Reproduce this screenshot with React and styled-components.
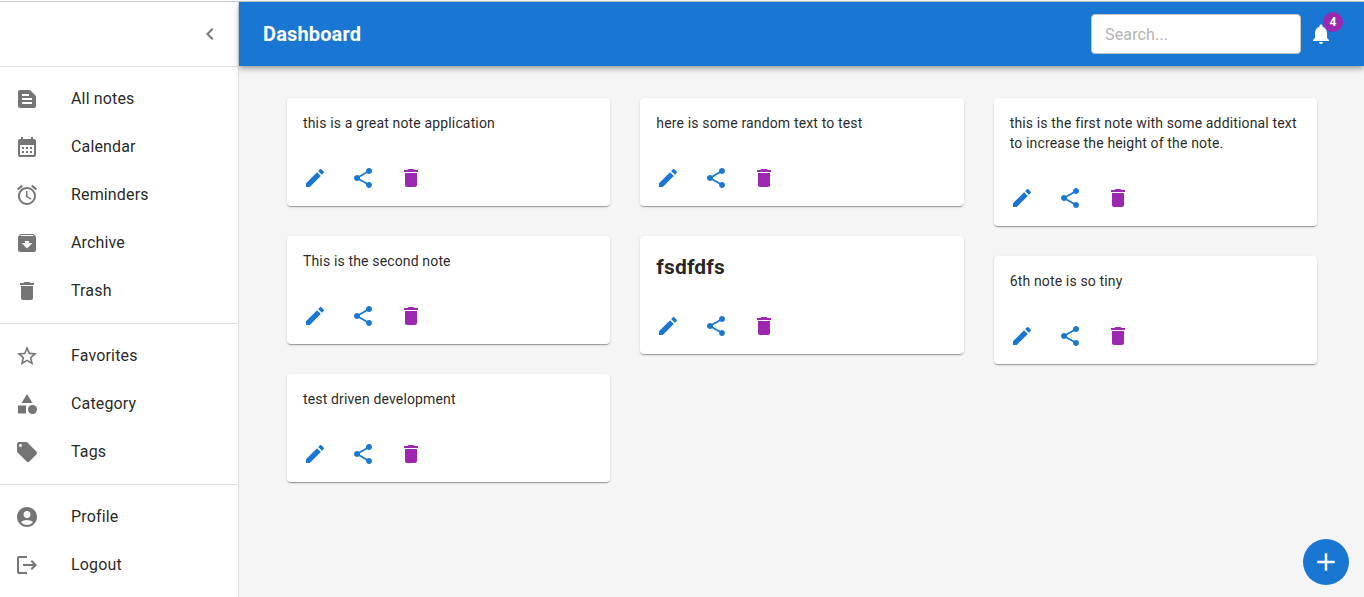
import React from 'react';
import styled, { createGlobalStyle } from 'styled-components';
import {
  MdTextSnippet, MdCalendarMonth, MdAccessAlarm, MdArchive, MdDelete, MdStarBorder,
  MdCategory, MdLocalOffer, MdAccountCircle, MdLogout, MdChevronLeft,
  MdNotifications, MdEdit, MdShare, MdAdd,
} from 'react-icons/md';

const GlobalStyle = createGlobalStyle`
  *, *::before, *::after { box-sizing: border-box; }
  body {
    margin: 0;
    background: #f5f5f5;
    color: rgba(0, 0, 0, 0.87);
    font-family: Roboto, "Liberation Sans", sans-serif;
    font-size: 16px;
    line-height: 1.5;
    letter-spacing: 0.00938em;
    overflow: hidden;
  }
`;

const Page = styled.div`
  display: flex;
  height: 597px;
  padding-top: 2px;
  background: linear-gradient(#ffffff 0 1px, #c9cccd 1px 2px, #f5f5f5 2px);
`;

const Sidebar = styled.aside`
  flex: 0 0 239px;
  background: #fff;
  border-right: 1px solid #e0e0e0;
`;

const SidebarHeader = styled.div`
  display: flex;
  align-items: center;
  justify-content: flex-end;
  height: 64px;
  padding-right: 8px;
`;

const IconButton = styled.button`
  display: inline-flex;
  padding: 8px;
  border: 0;
  border-radius: 50%;
  background: transparent;
  font-size: 24px;
  color: ${({ $color }) => $color};
`;

const NavList = styled.ul`
  margin: 0;
  padding: 8px 0;
  list-style: none;
  border-top: 1px solid #e0e0e0;
`;

const NavItem = styled.li`
  display: flex;
  align-items: center;
  height: 48px;
  padding-left: 15px;
`;

const NavIcon = styled.span`
  display: flex;
  width: 56px;
  font-size: 24px;
  color: #757575;
`;

const Main = styled.div`
  flex: 1;
  min-width: 0;
  display: flex;
  flex-direction: column;
`;

const AppBar = styled.header`
  display: flex;
  align-items: center;
  flex: 0 0 64px;
  padding: 0 31px 0 24px;
  color: #fff;
  background: #1976d2;
  box-shadow: 0 2px 4px -1px rgba(0, 0, 0, 0.2), 0 4px 5px rgba(0, 0, 0, 0.14), 0 1px 10px rgba(0, 0, 0, 0.12);
`;

const Title = styled.h1`
  flex: 1;
  margin: 0;
  font-size: 20px;
  font-weight: 700;
  line-height: 1.6;
  letter-spacing: 0.0075em;
`;

const SearchInput = styled.input`
  width: 210px;
  height: 40px;
  margin-right: 8px;
  padding: 0 13px;
  border: 1px solid #c4c4c4;
  border-radius: 4px;
  background: #fff;
  font: inherit;
  letter-spacing: inherit;
  &::placeholder { color: #b3b3b3; opacity: 1; }
`;

const Bell = styled.span`
  position: relative;
  display: flex;
  font-size: 24px;
`;

const Badge = styled.span`
  position: absolute;
  top: -10px;
  right: -10px;
  width: 20px;
  height: 20px;
  border-radius: 10px;
  background: #9c27b0;
  font-size: 12px;
  font-weight: 700;
  line-height: 20px;
  letter-spacing: 0;
  text-align: center;
`;

const Board = styled.main`
  display: grid;
  grid-template-columns: repeat(3, 1fr);
  align-items: start;
  gap: 30px;
  padding: 32px 47px 0 48px;
`;

const Column = styled.div`
  display: flex;
  flex-direction: column;
  gap: 30px;
`;

const Card = styled.article`
  border-radius: 4px;
  background: #fff;
  box-shadow: 0 2px 1px -1px rgba(0, 0, 0, 0.2), 0 1px 1px rgba(0, 0, 0, 0.14), 0 1px 3px rgba(0, 0, 0, 0.12);
`;

const NoteText = styled.div`
  padding: ${({ $heading }) => ($heading ? '16px' : '15px 16px 17px')};
  font-size: ${({ $heading }) => ($heading ? 21 : 14)}px;
  font-weight: ${({ $heading }) => ($heading ? 700 : 400)};
  line-height: ${({ $heading }) => ($heading ? 30 : 20)}px;
  letter-spacing: 0.15px;
`;

const Actions = styled.div`
  display: flex;
  gap: 8px;
  padding: 8px;
`;

const Fab = styled.button`
  position: fixed;
  right: 15px;
  bottom: 12px;
  display: flex;
  align-items: center;
  justify-content: center;
  width: 46px;
  height: 46px;
  padding: 0;
  border: 0;
  border-radius: 50%;
  background: #1976d2;
  color: #fff;
  font-size: 30px;
`;

const menu = [
  [['All notes', MdTextSnippet], ['Calendar', MdCalendarMonth], ['Reminders', MdAccessAlarm], ['Archive', MdArchive], ['Trash', MdDelete]],
  [['Favorites', MdStarBorder], ['Category', MdCategory], ['Tags', MdLocalOffer]],
  [['Profile', MdAccountCircle], ['Logout', MdLogout]],
];

const columns = [
  [{ text: 'this is a great note application' }, { text: 'This is the second note' }, { text: 'test driven development' }],
  [{ text: 'here is some random text to test' }, { text: 'fsdfdfs', heading: true }],
  [{ text: 'this is the first note with some additional text to increase the height of the note.' }, { text: '6th note is so tiny' }],
];

function Note({ text, heading }) {
  return (
    <Card>
      <NoteText $heading={heading}>{text}</NoteText>
      <Actions>
        <IconButton $color="#1976d2" aria-label="Edit"><MdEdit /></IconButton>
        <IconButton $color="#1976d2" aria-label="Share"><MdShare /></IconButton>
        <IconButton $color="#9c27b0" aria-label="Delete"><MdDelete /></IconButton>
      </Actions>
    </Card>
  );
}

export default function App() {
  return (
    <>
      <GlobalStyle />
      <Page>
        <Sidebar>
          <SidebarHeader>
            <IconButton $color="#757575" aria-label="Collapse"><MdChevronLeft /></IconButton>
          </SidebarHeader>
          {menu.map((items) => (
            <NavList key={items[0][0]}>
              {items.map(([label, Icon]) => (
                <NavItem key={label}>
                  <NavIcon><Icon /></NavIcon>
                  {label}
                </NavItem>
              ))}
            </NavList>
          ))}
        </Sidebar>
        <Main>
          <AppBar>
            <Title>Dashboard</Title>
            <SearchInput placeholder="Search..." />
            <Bell>
              <MdNotifications />
              <Badge>4</Badge>
            </Bell>
          </AppBar>
          <Board>
            {columns.map((notes) => (
              <Column key={notes[0].text}>
                {notes.map((note) => <Note key={note.text} {...note} />)}
              </Column>
            ))}
          </Board>
        </Main>
      </Page>
      <Fab aria-label="Add note"><MdAdd /></Fab>
    </>
  );
}
